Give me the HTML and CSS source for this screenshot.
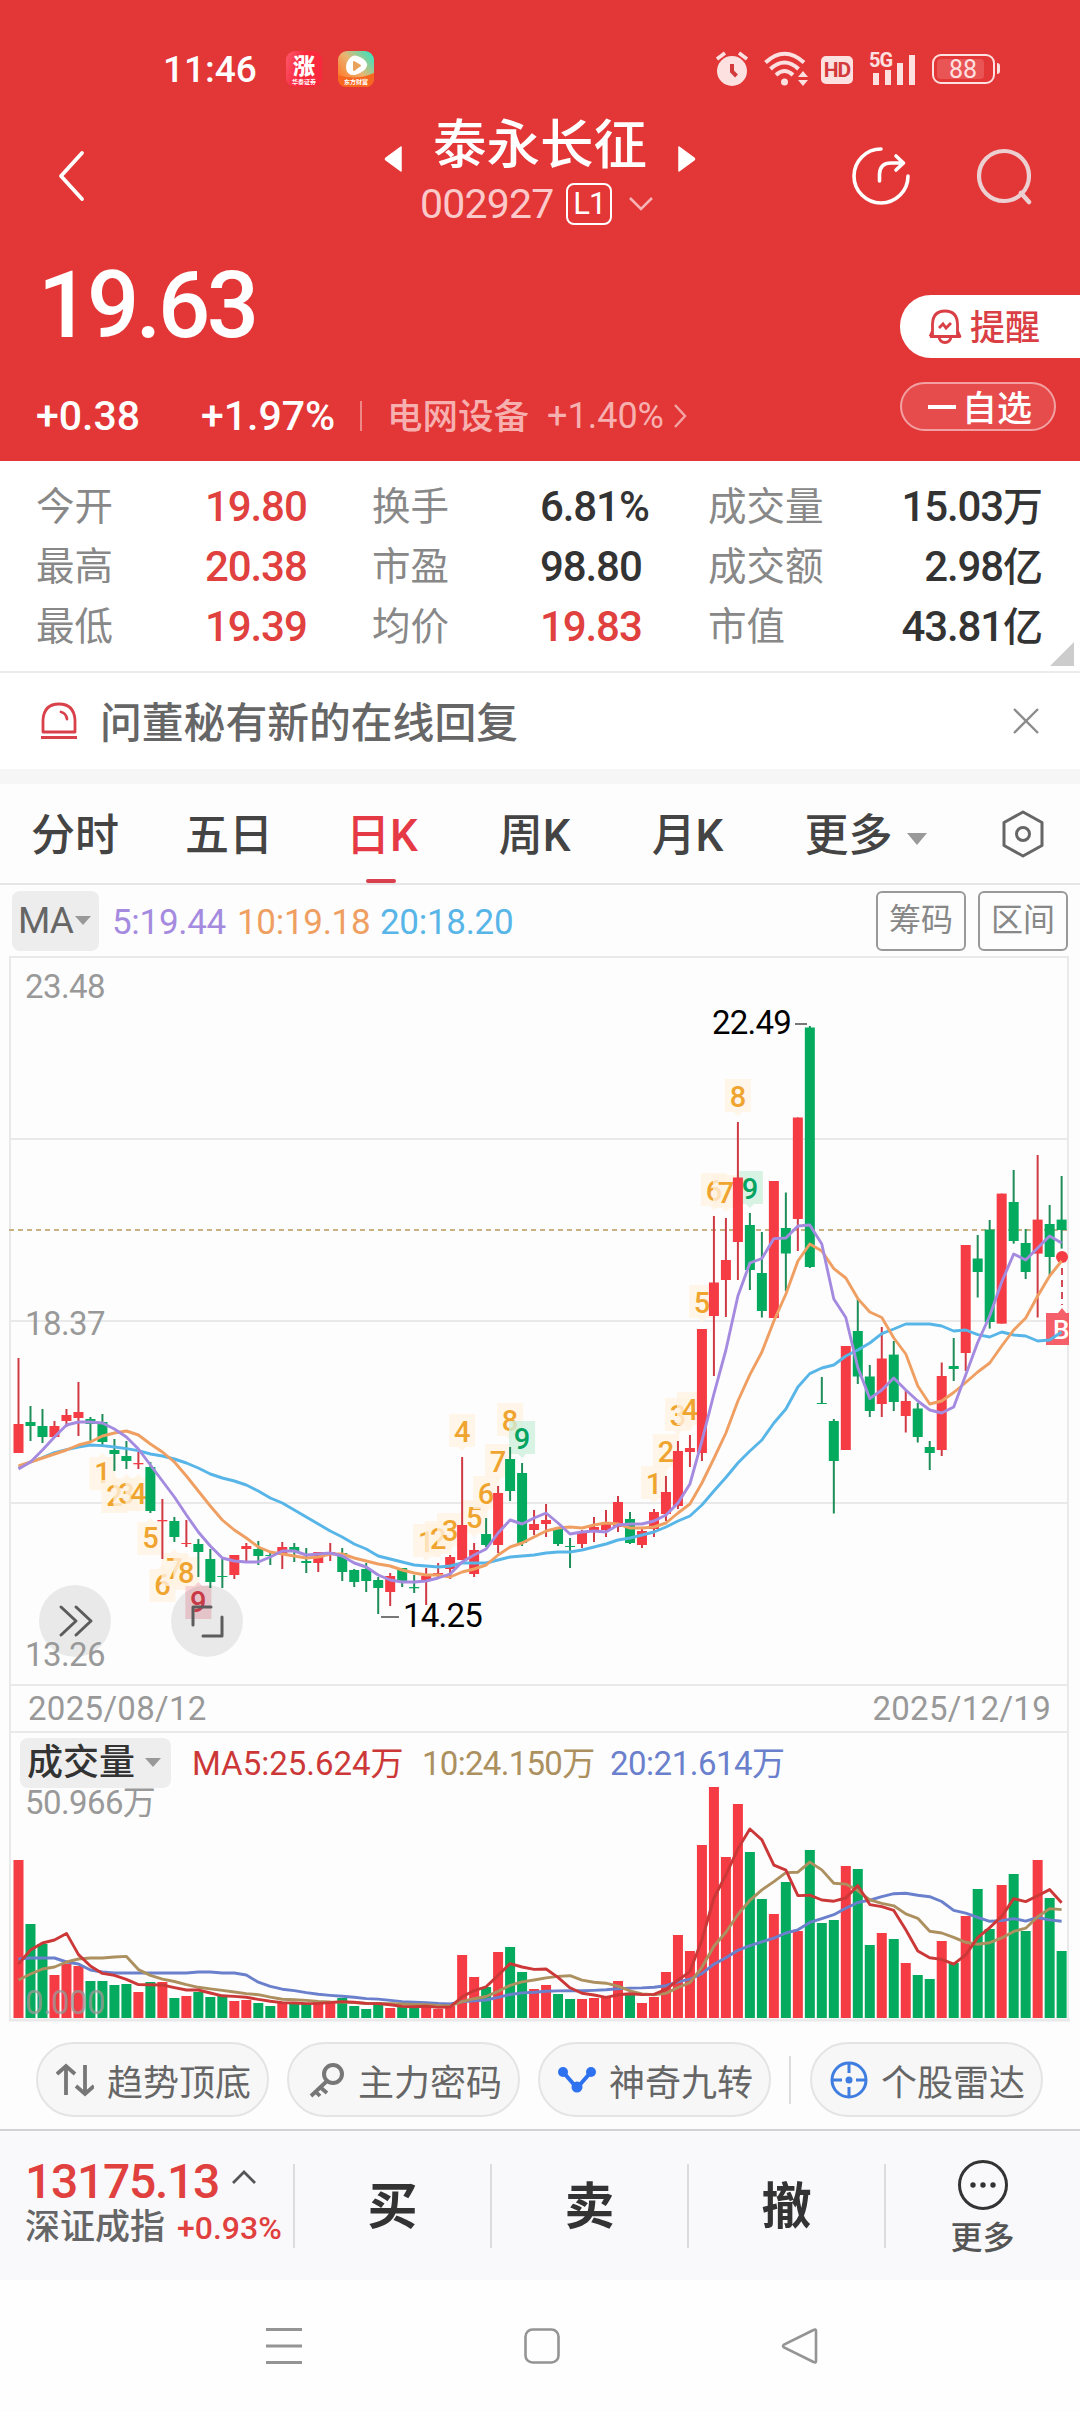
FILE: index.html
```html
<!DOCTYPE html>
<html lang="zh-CN">
<head>
    <meta charset="UTF-8">
    <meta name="viewport" content="width=device-width, initial-scale=1.0">
    <title>泰永长征 002927</title>
    <link rel="stylesheet" href="styles.css">
</head>
<body>
    <header class="header">
        <div class="status-bar">
            <span class="time">11:46</span>
            <svg class="app-icon" width="36" height="36" viewBox="0 0 36 36">
                <defs>
                    <linearGradient id="zhang" x1="0" y1="0" x2="1" y2="0.3">
                        <stop offset="0" stop-color="#ff5a6c"/>
                        <stop offset="0.5" stop-color="#f9283d"/>
                    </linearGradient>
                </defs>
                <rect width="36" height="36" rx="9" fill="url(#zhang)"/>
                <text class="app-char" x="18" y="23" text-anchor="middle">涨</text>
                <text class="app-sub" x="18" y="33" text-anchor="middle">华泰证券</text>
            </svg>
            <svg class="app-icon" width="36" height="36" viewBox="0 0 36 36">
                <defs>
                    <linearGradient id="play" x1="0.1" y1="0.8" x2="0.9" y2="0.1">
                        <stop offset="0" stop-color="#ff7a2a"/>
                        <stop offset="0.5" stop-color="#e9b573"/>
                        <stop offset="1" stop-color="#49e0b8"/>
                    </linearGradient>
                </defs>
                <rect width="36" height="36" rx="9" fill="url(#play)"/>
                <path d="M0 24 Q18 30 36 22 V27 Q36 36 27 36 H9 Q0 36 0 27Z" fill="#f8671f"/>
                <path d="M13 6 Q16 3 22 6 Q30 10 29 15 Q27 21 17 24 Q9 25 8 17 Q8 10 13 6Z" fill="#fff"/>
                <path d="M16 11 L22 14.5 L16 19Z" fill="#e8a25c" stroke="#e8a25c" stroke-width="2" stroke-linejoin="round"/>
                <text class="app-sub" x="18" y="33" text-anchor="middle">东方财富</text>
            </svg>
            <div class="status-right">
                <svg width="34" height="36" viewBox="0 0 34 36">
                    <circle cx="17" cy="20" r="15" fill="#fde0e0"/>
                    <path d="M2 8 L10 2 M24 2 L32 8" stroke="#fde0e0" stroke-width="3.6"/>
                    <path d="M17 13 V20.500 L21.500 25" stroke="#d23a3c" stroke-width="4" fill="none"/>
                </svg>
                <svg width="44" height="36" viewBox="0 0 44 36">
                    <g fill="none" stroke="#fde0e0" stroke-width="4">
                        <path d="M1.500 11.500 Q20.500 -6 40 11.500"/>
                        <path d="M6.500 18 Q20.500 5 34.500 18"/>
                        <path d="M12 24 Q20.500 16 29 24"/>
                    </g>
                    <circle cx="20.500" cy="31" r="3.500" fill="#fde0e0"/>
                    <path d="M34 26 L39 20 L44 26Z M34 29 L39 35 L44 29Z" fill="#fde0e0"/>
                </svg>
                <span class="hd">HD</span>
                <svg class="signal" width="48" height="40" viewBox="0 -4 48 40">
                    <text class="g5" x="0" y="16">5G</text>
                    <path d="M4 22 h6 v12 h-6Z M16 19 h6 v15 h-6Z M28 12 h6 v22 h-6Z M40 4 h6 v30 h-6Z" fill="#fde0e0"/>
                </svg>
                <span class="battery"><span class="battery-level">88</span></span>
            </div>
        </div>

        <div class="nav">
            <svg class="back" width="28" height="52" viewBox="0 0 28 52"><path d="M25 3 L4 26 L25 49" fill="none" stroke="#fff" stroke-width="3.800" stroke-linecap="round" stroke-linejoin="round"/></svg>
            <div class="nav-title">
                <div class="stock-name">
                    <svg width="18" height="28" viewBox="0 0 18 28"><path d="M17 2 V26 L2 15 Q1 14 2 13Z" fill="#fff" stroke="#fff" stroke-width="1.500" stroke-linejoin="round"/></svg>
                    <h1>泰永长征</h1>
                    <svg width="18" height="28" viewBox="0 0 18 28"><path d="M1 2 V26 L16 15 Q17 14 16 13Z" fill="#fff" stroke="#fff" stroke-width="1.500" stroke-linejoin="round"/></svg>
                </div>
                <div class="stock-code">
                    <span>002927</span>
                    <span class="level">L1</span>
                    <svg width="26" height="16" viewBox="0 0 26 16"><path d="M2 2 L13 13 L24 2" fill="none" stroke="#f7b5b5" stroke-width="2.500"/></svg>
                </div>
            </div>
            <svg class="share" width="60" height="60" viewBox="0 0 60 60">
                <path d="M30 3 A27 27 0 1 0 57 30" fill="none" stroke="#fff" stroke-width="3.600" stroke-linecap="round"/>
                <path d="M28.500 35 V28 Q29 17 40 17 H51 M45 10 L52.500 17 L45 24" fill="none" stroke="#fff" stroke-width="3.600" stroke-linecap="round" stroke-linejoin="round"/>
            </svg>
            <svg class="search" width="58" height="58" viewBox="0 0 58 58"><path d="M45 46 L53 55" stroke="#eccfd0" stroke-width="4.500" stroke-linecap="round"/><circle cx="28" cy="29" r="25" fill="none" stroke="#eccfd0" stroke-width="4.200"/></svg>
        </div>

        <div class="quote">
            <div class="quote-main">
                <div class="price">19.63</div>
                <div class="change-row">
                    <span class="change">+0.38</span>
                    <span class="percent">+1.97%</span>
                    <span class="change-line"></span>
                    <span class="sector">电网设备</span>
                    <span class="sector-percent">+1.40%</span>
                    <svg width="14" height="26" viewBox="0 0 14 26"><path d="M2 2 L12 13 L2 24" fill="none" stroke="#f3a3a3" stroke-width="2.500"/></svg>
                </div>
            </div>
            <div class="quote-side">
                <div class="remind">
                    <svg width="34" height="36" viewBox="0 0 34 36">
                        <path d="M4.500 27 V15 Q5 2 17 2 Q29 2 29.500 15 V27 M2 27.500 H32 L29.500 22 M2 27.500 L4.500 22 M11 28 Q12 33.500 17 33.500 Q22 33.500 23 28" fill="none" stroke="#d93f45" stroke-width="2.800" stroke-linejoin="round"/>
                        <path d="M11 19 L15 15 L18 19 L23 14" fill="none" stroke="#d93f45" stroke-width="2.800"/>
                    </svg>
                    <span>提醒</span>
                </div>
                <div class="watch"><i class="minus"></i><span>自选</span></div>
            </div>
        </div>
    </header>

    <section class="stats">
        <span class="label">今开</span><span class="value red">19.80</span>
        <span class="label">换手</span><span class="value">6.81%</span>
        <span class="label">成交量</span><span class="value end">15.03<b>万</b></span>
        <span class="label">最高</span><span class="value red">20.38</span>
        <span class="label">市盈</span><span class="value">98.80</span>
        <span class="label">成交额</span><span class="value end">2.98<b>亿</b></span>
        <span class="label">最低</span><span class="value red">19.39</span>
        <span class="label">均价</span><span class="value red">19.83</span>
        <span class="label">市值</span><span class="value end">43.81<b>亿</b></span>
        <i class="corner"></i>
    </section>

    <section class="notice">
        <svg width="36" height="38" viewBox="0 0 36 38">
            <path d="M2 30 V18 Q3 2 18 2 Q33 2 34 18 V30Z" fill="none" stroke="#d9414a" stroke-width="2.800" stroke-linejoin="round"/>
            <path d="M20 10 Q25 11 26 17" fill="none" stroke="#d9414a" stroke-width="2.800" stroke-linecap="round"/>
            <path d="M0 35.500 H36" stroke="#d9414a" stroke-width="3"/>
        </svg>
        <span class="notice-text">问董秘有新的在线回复</span>
        <svg width="28" height="28" viewBox="0 0 28 28"><path d="M2 2 L26 26 M26 2 L2 26" stroke="#8c8c8c" stroke-width="2.400"/></svg>
    </section>

    <nav class="tabs">
        <span class="tab">分时</span>
        <span class="tab">五日</span>
        <span class="tab active">日K</span>
        <span class="tab">周K</span>
        <span class="tab">月K</span>
        <span class="tab more">更多<i class="caret"></i></span>
        <svg class="setting" width="44" height="48" viewBox="0 0 44 48">
            <path d="M22 2 L41 12.500 V35.500 L22 46 L3 35.500 V12.500Z" fill="none" stroke="#666" stroke-width="3" stroke-linejoin="round"/>
            <circle cx="22" cy="24" r="6.500" fill="none" stroke="#666" stroke-width="3"/>
        </svg>
    </nav>

    <div class="ma-bar">
        <span class="ma-button">MA<i class="caret small"></i></span>
        <span class="ma5">5:19.44</span>
        <span class="ma10">10:19.18</span>
        <span class="ma20">20:18.20</span>
        <span class="outline-button first">筹码</span>
        <span class="outline-button">区间</span>
    </div>

    <svg class="kline" id="kline" width="1080" height="730" viewBox="0 0 1080 730"></svg>

    <div class="dates"><span>2025/08/12</span><span>2025/12/19</span></div>

    <div class="volume">
        <div class="volume-bar">
            <span class="volume-button">成交量<i class="caret small"></i></span>
            <span class="vol5">MA5:25.624万</span>
            <span class="vol10">10:24.150万</span>
            <span class="vol20">20:21.614万</span>
        </div>
        <svg class="volume-chart" id="volume" width="1080" height="235" viewBox="0 0 1080 235"></svg>
    </div>

    <div class="chips">
        <span class="chip">
            <svg width="38" height="36" viewBox="0 0 38 36"><path d="M10 33 V4 M1 12 L10 4 L19 12 M29 3 V32 M20 24 L29 32 L38 24" fill="none" stroke="#777" stroke-width="3.800"/></svg>
            趋势顶底
        </span>
        <span class="chip">
            <svg width="38" height="36" viewBox="0 0 38 36"><circle cx="26" cy="12" r="9" fill="none" stroke="#777" stroke-width="4"/><path d="M20 19 L4 34 M13 25 L20 31 M8 29 L13 34" stroke="#777" stroke-width="3.800" fill="none"/></svg>
            主力密码
        </span>
        <span class="chip">
            <svg width="38" height="36" viewBox="0 0 38 36"><path d="M5 10 L19 26 L33 10" fill="none" stroke="#2e72f0" stroke-width="4"/><circle cx="5" cy="10" r="5" fill="#2e72f0"/><circle cx="33" cy="10" r="5" fill="#2e72f0"/><circle cx="19" cy="25" r="5.500" fill="#2e72f0"/></svg>
            神奇九转
        </span>
        <i class="chip-line"></i>
        <span class="chip">
            <svg width="38" height="38" viewBox="0 0 38 38"><circle cx="19" cy="19" r="17" fill="none" stroke="#3f7de0" stroke-width="3"/><path d="M19 2 V12 M19 26 V36 M2 19 H12 M26 19 H36" stroke="#3f7de0" stroke-width="3"/><circle cx="19" cy="19" r="3.500" fill="#3f7de0"/></svg>
            个股雷达
        </span>
    </div>

    <footer class="trade">
        <div class="index">
            <div class="index-value">13175.13<svg width="26" height="16" viewBox="0 0 26 16"><path d="M2 14 L13 3 L24 14" fill="none" stroke="#555" stroke-width="2.800"/></svg></div>
            <div class="index-name">深证成指<span>+0.93%</span></div>
        </div>
        <div class="trade-item">买</div>
        <div class="trade-item">卖</div>
        <div class="trade-item">撤</div>
        <div class="trade-more">
            <svg width="52" height="52" viewBox="0 0 52 52"><circle cx="26" cy="26" r="23.500" fill="none" stroke="#333" stroke-width="3"/><circle cx="16" cy="26" r="2.700" fill="#333"/><circle cx="26" cy="26" r="2.700" fill="#333"/><circle cx="36" cy="26" r="2.700" fill="#333"/></svg>
            <span>更多</span>
        </div>
    </footer>

    <div class="system-nav">
        <svg width="38" height="40" viewBox="0 0 38 40"><path d="M1 3.500 H37 M1 20 H37 M1 36.500 H37" stroke="#949494" stroke-width="3"/></svg>
        <svg width="38" height="40" viewBox="0 0 38 40"><rect x="2.500" y="3.500" width="33" height="33" rx="7" fill="none" stroke="#949494" stroke-width="2.600"/></svg>
        <svg width="38" height="40" viewBox="0 0 38 40"><path d="M35 5 V35 Q35 37.500 32.500 36 L3 21.500 Q1 20 3 18.500 L32.500 4 Q35 2.500 35 5Z" fill="none" stroke="#949494" stroke-width="2.600"/></svg>
    </div>

    <script src="script.js"></script>
</body>
</html>
```
FILE: styles.css
```css
* {
    box-sizing: border-box;
}
body {
    margin: 0;
    width: 1080px;
    height: 2412px;
    overflow: hidden;
    background-color: #fdfdfd;
    color: #333;
    font-family: Roboto, "Noto Sans CJK SC", sans-serif;
}
svg {
    display: block;
    flex: none;
}
span, i {
    white-space: nowrap;
    flex: none;
}

/* header */
.header {
    height: 461px;
    background-color: #e33637;
    color: #fff;
}
.status-bar {
    display: flex;
    align-items: center;
    height: 138px;
    padding-left: 163px;
}
.time {
    width: 123px;
    font-size: 37px;
    font-weight: 500;
}
.app-icon {
    margin-right: 16px;
}
.app-char {
    font-size: 22px;
    font-weight: 900;
    fill: #fff;
}
.app-sub {
    font-size: 6px;
    font-weight: 700;
    fill: #fff;
}
.status-right {
    display: flex;
    align-items: center;
    margin-left: 325px;
    color: #fde0e0;
}
.status-right svg:nth-child(2) {
    margin: 0 13px 0 15px;
}
.hd {
    width: 32px;
    height: 28px;
    border-radius: 5px;
    background-color: #fde0e0;
    color: #d23a3c;
    font-size: 21px;
    font-weight: 700;
    line-height: 29px;
    letter-spacing: -1px;
    text-align: center;
    margin-top: 2px;
}
.signal {
    margin: -4px 0 0 16px;
}
.g5 {
    font-size: 20px;
    font-weight: 700;
    letter-spacing: -1px;
    fill: #fde0e0;
}
.battery {
    position: relative;
    width: 63px;
    height: 30px;
    margin-left: 15px;
    padding: 3px;
    border: 2.5px solid #fde0e0;
    border-radius: 9px;
}
.battery::after {
    content: "";
    position: absolute;
    right: -7px;
    top: 7px;
    width: 3px;
    height: 11px;
    border-radius: 0 3px 3px 0;
    background-color: #fde0e0;
}
.battery-level {
    display: block;
    width: 47px;
    height: 20px;
    padding-left: 12px;
    border-radius: 4px;
    background-color: #e95455;
    font-size: 25px;
    line-height: 21px;
}
.nav {
    display: flex;
    height: 100px;
    padding-left: 57px;
}
.back {
    margin-top: 12px;
}
.nav-title {
    width: 330px;
    margin-left: 290px;
    margin-top: -29px;
}
.stock-name {
    display: flex;
    align-items: center;
    justify-content: center;
    height: 72px;
}
.stock-name svg {
    margin-top: 28px;
}
.stock-name h1 {
    margin: 0 31px;
    font-size: 53.5px;
    font-weight: 500;
    line-height: 75px;
}
.stock-code {
    display: flex;
    align-items: center;
    height: 46px;
    padding-left: 45px;
    font-size: 41px;
    letter-spacing: -0.8px;
    color: #fbc9ca;
}
.level {
    width: 46px;
    height: 42px;
    margin: 0 16px 0 13px;
    border: 2.5px solid #fff;
    border-radius: 8px;
    color: #fff;
    font-size: 31px;
    line-height: 38px;
    text-align: center;
}
.share {
    margin: 8px 0 0 146px;
}
.search {
    margin: 9px 0 0 65px;
}
.quote {
    display: flex;
    justify-content: space-between;
    height: 222px;
}
.price {
    height: 132px;
    padding-left: 38px;
    font-size: 92px;
    font-weight: 500;
    line-height: 136px;
    letter-spacing: -3.4px;
}
.change-row {
    display: flex;
    align-items: center;
    height: 92px;
    padding-left: 36px;
    font-size: 42px;
}
.change {
    width: 165px;
    font-weight: 500;
    font-size: 41px;
}
.percent {
    width: 159px;
    font-weight: 500;
    font-size: 41px;
}
.change-line {
    width: 2px;
    height: 30px;
    background-color: #ef8788;
}
.sector {
    width: 185px;
    padding-left: 25px;
    font-size: 35.5px;
    font-weight: 500;
    line-height: 50px;
    margin-top: 1px;
    color: #f7b0b0;
}
.sector-percent {
    width: 126px;
    font-size: 36px;
    color: #f7b0b0;
}
.quote-side {
    width: 180px;
    padding-top: 57px;
}
.remind {
    display: flex;
    align-items: center;
    height: 63px;
    padding-left: 28px;
    border-radius: 31px 0 0 31px;
    background-color: #fff;
    color: #d93f45;
    font-size: 35px;
    font-weight: 500;
}
.remind span {
    margin: -4px 0 0 8px;
}
.watch {
    display: flex;
    align-items: center;
    width: 156px;
    height: 49px;
    margin-top: 24px;
    padding-left: 26px;
    border: 2px solid #f2a0a1;
    border-radius: 25px;
    background-color: #e74c4d;
    font-size: 35px;
    font-weight: 500;
}
.watch span {
    margin-top: -3px;
}
.minus {
    width: 28px;
    height: 4px;
    margin-right: 6px;
    background-color: #fff;
}

/* key figures */
.stats {
    position: relative;
    display: grid;
    grid-template-columns: 169px 167px 168px 168px 160px 174px;
    grid-auto-rows: 60px;
    height: 212px;
    padding: 16px 36px 0 36px;
    border-bottom: 2px solid #ececec;
    background-color: #fff;
    line-height: 60px;
}
.label {
    font-size: 38.5px;
    color: #888;
}
.value {
    font-size: 42px;
    font-weight: 500;
    letter-spacing: -1.1px;
}
.value b {
    font-size: 40px;
    font-weight: 500;
}
.end {
    text-align: right;
}
.red {
    color: #e0403e;
}
.corner {
    position: absolute;
    right: 6px;
    bottom: 5px;
    border-left: 24px solid transparent;
    border-bottom: 24px solid #ccc;
}

.notice {
    display: flex;
    align-items: center;
    height: 96px;
    padding: 0 40px 0 41px;
    background-color: #fff;
}
.notice-text {
    flex: 1;
    padding-left: 23px;
    margin-top: -2px;
    font-size: 41.8px;
    font-weight: 500;
    color: #666;
}

/* period tabs */
.tabs {
    display: flex;
    align-items: center;
    height: 116px;
    padding-left: 31px;
    border-top: 15px solid #f6f6f6;
    border-bottom: 2px solid #e6e6e6;
}
.tab {
    position: relative;
    font-size: 44px;
    font-weight: 500;
    line-height: 104px;
    height: 99px;
    color: #444;
}
.tab:nth-child(2) { margin-left: 66px; }
.tab:nth-child(3) { margin-left: 73px; }
.tab:nth-child(4) { margin-left: 81px; }
.tab:nth-child(5) { margin-left: 81px; }
.more {
    margin-left: 81px;
}
.active {
    color: #e63946;
}
.active::after {
    content: "";
    position: absolute;
    left: 20px;
    bottom: 0;
    width: 30px;
    height: 4px;
    border-radius: 2px;
    background-color: #d93f4c;
}
.caret {
    display: inline-block;
    margin-left: 15px;
    border: 10.5px solid transparent;
    border-top: 12px solid #999;
    border-bottom: 0;
    vertical-align: 6px;
}
.small {
    border-width: 8px;
    border-top-width: 9px;
    border-bottom: 0;
    margin-left: 2px;
    vertical-align: 8px;
}
.setting {
    margin-left: 74px;
}
.ma-bar {
    display: flex;
    align-items: center;
    height: 71px;
    padding-left: 12px;
    font-size: 35px;
    letter-spacing: -0.3px;
}
.ma-button {
    width: 87px;
    height: 60px;
    padding-left: 6px;
    border-radius: 8px;
    background-color: #ededed;
    color: #666;
    font-size: 37px;
    line-height: 60px;
    letter-spacing: -1px;
}
.ma5 { width: 125px; margin-left: 13px; color: #a58be0; }
.ma10 { width: 143px; color: #ef9f62; }
.ma20 { width: 143px; color: #58b5e8; }
.ma5, .ma10, .ma20 { padding-top: 3px; }
.outline-button {
    width: 90px;
    height: 60px;
    margin-left: 12px;
    border: 2px solid #999;
    border-radius: 6px;
    color: #888;
    font-size: 32px;
    line-height: 54px;
    letter-spacing: 0;
    text-align: center;
}
.first {
    margin-left: 353px;
}

/* charts */
.grid { stroke: #e9e9e9; stroke-width: 2; }
.up { fill: #f53b43; stroke: none; }
.down { fill: #04ab5f; stroke: none; }
.up-line { stroke: #cf3a44; stroke-width: 2; }
.down-line { stroke: #1f8d59; stroke-width: 2; }
.line { fill: none; stroke-width: 2.9; stroke-linejoin: round; }
.line5 { stroke: #a58be0; }
.line10 { stroke: #ef9f62; }
.line20 { stroke: #58b5e8; }
.vline5 { stroke: #cc3838; }
.vline10 { stroke: #ac905f; }
.vline20 { stroke: #6a80cc; }
.last-price { stroke: #c9b183; stroke-width: 1.8; stroke-dasharray: 5 4; }
.axis-text { font-size: 33px; letter-spacing: -0.6px; fill: #999; }
.mark-text { font-size: 33px; fill: #000; letter-spacing: -0.8px; }
.badge { fill: #fff2e2; fill-opacity: 0.78; }
.badge-text { font-size: 29px; font-weight: 500; fill: #efa42f; text-anchor: middle; }
.badge.green { fill: #cdeedd; }
.badge-text.green { fill: #04a35f; }
.badge.pink { fill: #f6c9d0; }
.badge-text.pink { fill: #d93f4c; }
.float { fill: #000; fill-opacity: 0.078; }
.float-icon { fill: none; stroke: #5c5c5c; stroke-width: 3; stroke-linecap: round; stroke-linejoin: round; }
.buy-badge { fill: #f2434f; fill-opacity: 0.85; }
.buy-text { font-size: 26px; font-weight: 500; fill: #fff; }
.buy-line { stroke: #d04a57; stroke-width: 2; stroke-dasharray: 7 5; }

.dates {
    display: flex;
    justify-content: space-between;
    align-items: center;
    height: 45px;
    margin: 0 11px 0 9px;
    padding: 0 16px 0 17px;
    border-left: 2px solid #e9e9e9;
    border-right: 2px solid #e9e9e9;
    color: #999;
    font-size: 33px;
    letter-spacing: 0.3px;
}
.volume {
    height: 291px;
}
.volume-chart {
    overflow: visible;
}
.volume-bar {
    display: flex;
    align-items: center;
    height: 56px;
    margin: 0 11px 0 9px;
    padding: 6px 0 0 9px;
    border: 2px solid #e9e9e9;
    border-bottom: 0;
    font-size: 33px;
    line-height: 46px;
}
.volume-button {
    width: 151px;
    height: 50px;
    padding-left: 7px;
    border-radius: 8px;
    background-color: #eee;
    font-size: 36px;
    font-weight: 500;
    line-height: 50px;
}
.volume-button .caret {
    margin-left: 10px;
}
.vol5, .vol10, .vol20 { margin-top: 2px; }
.vol5 { width: 230px; margin-left: 21px; color: #cc3838; }
.vol10 { width: 188px; color: #ac905f; letter-spacing: -0.7px; }
.vol20 { color: #6a80cc; letter-spacing: -0.5px; }

.chips {
    display: flex;
    align-items: center;
    height: 107px;
    padding: 8px 0 0 36px;
}
.chip {
    display: flex;
    align-items: center;
    width: 233px;
    height: 75px;
    margin-right: 18px;
    padding-left: 18px;
    border: 2px solid #e4e4e4;
    border-radius: 38px;
    background-color: #f7f7f7;
    color: #666;
    font-size: 36px;
}
.chip svg {
    margin-right: 13px;
}
.chip-line {
    width: 2px;
    height: 48px;
    margin-right: 19px;
    background-color: #ddd;
}

/* bottom bar */
.trade {
    display: flex;
    height: 151px;
    border-top: 2px solid #d2d2d4;
    background-color: #f9f9fb;
}
.index {
    width: 293px;
    padding: 22px 0 0 25px;
}
.index-value {
    display: flex;
    align-items: center;
    height: 56px;
    color: #e0403e;
    font-size: 48px;
    font-weight: 500;
    letter-spacing: -1.3px;
}
.index-value svg {
    margin: -8px 0 0 12px;
}
.index-name {
    height: 38px;
    color: #666;
    font-size: 35px;
    font-weight: 500;
    line-height: 38px;
}
.index-name span {
    margin-left: 12px;
    color: #e0403e;
    font-size: 32px;
}
.trade-item {
    width: 197px;
    height: 84px;
    margin-top: 33px;
    border-left: 2px solid #dcdcde;
    font-size: 50px;
    font-weight: 700;
    line-height: 86px;
    text-align: center;
}
.trade-more {
    display: flex;
    flex-direction: column;
    align-items: center;
    width: 195px;
    height: 84px;
    margin-top: 33px;
    border-left: 2px solid #dcdcde;
    color: #555;
    font-size: 32px;
    font-weight: 500;
    line-height: 48px;
}
.trade-more svg {
    margin-top: -5px;
    margin-bottom: 3px;
}
.system-nav {
    display: flex;
    gap: 220px;
    height: 131px;
    padding: 46px 0 0 265px;
    background-color: #fefefe;
}
```
FILE: script.js
```js
const STEP = 11.99;
const FIRST = 18.5;
const cx = i => FIRST + i * STEP;

// [direction, high, low, body top, body bottom]
const candles = [
    ['r',402,497,468,497], ['g',450,485,466,470], ['g',453,487,470,481], ['r',465,481,470,481],
    ['r',453,471,459,465], ['r',426,480,456,462], ['g',461,485,463,468], ['g',458,491,466,486],
    ['g',483,515,494,498], ['g',485,513,500,505], ['r',496,513,507,508.3], ['g',506,557,511,555],
    ['r',543,603,564,565.3], ['g',561,586,565,581], ['r',564,591,587,588], ['g',583,621,588,596],
    ['g',593,632,603,626], ['g',603,632,620,621], ['r',599,623,599,619], ['r',587,607,590,593],
    ['g',585,609,593,600], ['g',595,609,599,600], ['r',586,613,591,599], ['g',587,606,591,596],
    ['g',592,617,605,607], ['r',596,616,596,607], ['r',587,605,596,598], ['g',592,625,597,616],
    ['g',613,631,614,626], ['g',607,636,613,625], ['g',621,658,624,632], ['r',617,650,620,636],
    ['g',612,631,612,625], ['g',619,637,631,632.3], ['r',612,649,620,625], ['r',607,623,617,618.3],
    ['r',599,623,601,613], ['r',501,604,569,604], ['r',587,621,594,618], ['g',562,591,578,589],
    ['r',530,597,537,589], ['g',491,545,503,535], ['g',507,590,517,587], ['r',554,579,568,574],
    ['r',548,581,564,568], ['g',572,590,573,588], ['g',582,612,590,591], ['r',574,592,577,588],
    ['r',561,586,571,574], ['r',554,581,568,574], ['r',540,576,546,571], ['g',556,588,563,587],
    ['r',573,592,575,589], ['r',553,581,556,573], ['r',520,565,536,558], ['r',485,553,495,550],
    ['r',479,511,492,496], ['r',373,505,373,497], ['r',260,420,326.5,360], ['r',262,361,304,324],
    ['r',166,324,221.5,286], ['g',257,334,269,314], ['g',276,361.5,317,355], ['r',225,362,225,362],
    ['g',236.5,335,272,297.5], ['r',161.5,295,161.5,263], ['g',70,312,71.5,311], ['g',421,448,447,448],
    ['g',463,557.5,465,505], ['r',390,494,390,494], ['g',343,428,375,420.5], ['g',409,461,420.5,455],
    ['r',371,461,402.5,448], ['g',385,455,398.6,446], ['r',435,476.5,445,460], ['g',447,486.5,452.5,481],
    ['g',485,514,491,497], ['r',406.5,500,420,494], ['g',382,425,410,413], ['r',289,415,289,397],
    ['g',279,341.5,302.5,316], ['g',264,372.6,273.6,366], ['r',237.6,367.6,237.6,367.6], ['g',214,287.6,246,285],
    ['g',273,323,287,316], ['r',199,361.5,263.6,297.6], ['g',249,319,268,301], ['g',220,292.6,263.6,274]
];

const ma5 = [513,506,494,481,469,466,466,467,473,481,493,509,525,541,559,576,590,602,605,606,606,601,595,595,599,598,597,600,607,611,619,624,626,626,625,622,618,606,599,593,577,564,568,562,557,567,578,576,575,576,569,568,568,565,559,547,528,485,438,394,340,307,302.5,282.6,282,270,269,288,343,361.5,411.5,442.6,434,422,434,445,454,457,451,419,386.5,360,326,298,304,292,280,287];
const ma10 = [510,506,502,498,494,489,486,480,477,475,479,488,496,506,520,535,550,564,574,582,591,596,598,600,602,601,598,598,602,605,608,610,614,617,619,619,621,616,613,609,599,591,587,581,575,572,571,572,569,567,568,572,572,571,567,557,548,527,502.5,477,445,418.6,396,365,338,305,288,295,312.6,322,342.6,356,361.5,382,398,430,448,445,436.5,426.5,416,407,390,374,362,340,320,305];
const ma20 = [512,506,501.6,496.6,493.6,491,489,489.6,491,492.6,494.6,498,500,503,507,512,518,522,525,529,535,542,547,554,561,568,575,581,588,593,600,603,606,609,610,611,610,607,607,607,604,601,600,599,597,596,596,594,591,588,584,582,579,576,571,565,560,549,535,521.5,507,495,484,467,453,431,417.6,412,409,400,394,387,377.6,373,368,368,368,370,375,374,378.6,381,376,379,380,385,384,376];

// nine-turn counters: [candle index, digit, top, tip direction, colour]
const badges = [
    [7,1,501,'up',''], [8,2,524,'up',''], [9,3,522,'up',''], [10,4,522,'up',''], [11,5,566,'up',''],
    [12,6,613,'up',''], [13,7,597,'up',''], [14,8,601,'up',''], [15,9,630,'up','pink'],
    [34,1,568,'down',''], [35,2,565,'down',''], [36,3,557,'down',''], [37,4,458,'down',''], [38,5,544,'down',''],
    [39,6,520,'down',''], [40,7,488,'down',''], [41,8,447,'down',''], [42,9,465,'down','green'],
    [53,1,510,'down',''], [54,2,478,'down',''], [55,3,442,'down',''], [56,4,436,'down',''], [57,5,329,'down',''],
    [58,6,217,'down',''], [59,7,219,'down',''], [60,8,123,'down',''], [61,9,215,'down','green']
];

const volumes = [158,94,74,43,54,52,37,37,33,34,26,36,36,20,22,26,21,22,17,18,15,12,15,15,15,16,16,20,12,9,15,10,12,10,12,9,12,63,41,31,66,71,46,29,33,24,19,19,20,21,37,24,15,21,46,83,67,173,231,161,214,166,119,104,136,87,168,95,98,152,149,73,85,79,55,43,39,77,55,102,129,89,133,144,87,158,120,67];

const points = (list, toY) => list.map((v, i) => cx(i).toFixed(1) + ',' + toY(v).toFixed(1)).join(' ');

function drawKline() {
    let s = '';
    [1, 183, 365, 547, 729].forEach(y => s += `<line class="grid" x1="9" x2="1069" y1="${y}" y2="${y}"/>`);
    s += '<line class="grid" x1="10" x2="10" y1="0" y2="730"/><line class="grid" x1="1068" x2="1068" y1="0" y2="730"/>';
    s += '<line class="last-price" x1="9" x2="1069" y1="274" y2="274"/>';

    badges.forEach(([i, n, top, tip, color]) => {
        const x = cx(i);
        const arrow = tip === 'up'
            ? `M${x - 4} ${top} l4 -4 l4 4Z`
            : `M${x - 4} ${top + 33} l4 4 l4 -4Z`;
        s += `<path class="badge ${color}" d="M${x - 13} ${top} h26 v33 h-26Z ${arrow}"/>`;
        s += `<text class="badge-text ${color}" x="${x}" y="${top + (tip === 'up' ? 26 : 28)}">${n}</text>`;
    });

    candles.forEach(([d, high, low, top, bottom], i) => {
        const x = cx(i);
        const name = d === 'r' ? 'up' : 'down';
        s += `<line class="${name}-line" x1="${x}" x2="${x}" y1="${high}" y2="${low}"/>`;
        s += `<rect class="${name}" x="${x - 5}" y="${top}" width="10" height="${bottom - top}"/>`;
    });

    // buy marker
    s += '<circle class="up" cx="1062" cy="301" r="6"/><line class="buy-line" x1="1062" x2="1062" y1="312" y2="349"/>';
    s += '<path class="buy-badge" d="M1046 357 h12 l4 -5 l4 5 h3 v32 h-23Z"/><text class="buy-text" x="1053" y="383">B</text>';

    s += `<polyline class="line line20" points="${points(ma20, v => v)}"/>`;
    s += `<polyline class="line line10" points="${points(ma10, v => v)}"/>`;
    s += `<polyline class="line line5" points="${points(ma5, v => v)}"/>`;

    s += '<circle class="float" cx="75" cy="665" r="36"/><path class="float-icon" d="M61 651 L76 665 L61 679 M76 651 L91 665 L76 679"/>';
    s += '<circle class="float" cx="207" cy="665" r="36"/><path class="float-icon" d="M211 651 H193 V669 M203 680 H222 V661"/>';

    s += '<text class="axis-text" x="25" y="42">23.48</text><text class="axis-text" x="25" y="379">18.37</text><text class="axis-text" x="25" y="710">13.26</text>';
    s += '<text class="mark-text" x="712" y="78">22.49</text><path d="M795 68 H807 M381 661 H399" stroke="#777" stroke-width="2"/><text class="mark-text" x="403" y="671">14.25</text>';
    document.getElementById('kline').innerHTML = s;
}

// moving average of the last n bars, the first values come from earlier days
function average(n, seed) {
    return volumes.map((v, i) => i < seed.length ? seed[i] : volumes.slice(i - n + 1, i + 1).reduce((a, b) => a + b) / n);
}

function drawVolume() {
    const base = 231;
    let s = '<path class="grid" fill="none" d="M10 0 V232 M1068 0 V232"/><path d="M9 233 H1070" stroke="#e9e9e9" stroke-width="3"/>';
    volumes.forEach((v, i) => {
        s += `<rect class="${candles[i][0] === 'r' ? 'up' : 'down'}" x="${cx(i) - 5}" y="${base - v}" width="10" height="${v}"/>`;
    });
    const toY = v => base - v;
    s += `<polyline class="line vline20" points="${points(average(20, [59,60,60,60,56,54,48,46,45,45,45,45,45,45,45,46,46,45,45]), toY)}"/>`;
    s += `<polyline class="line vline10" points="${points(average(10, [38,44,49,51,56,59,60,60,61]), toY)}"/>`;
    s += `<polyline class="line vline5" points="${points(average(5, [54,68,75,78]), toY)}"/>`;
    s += '<text class="axis-text" x="25" y="27">50.966万</text><text class="axis-text" x="25" y="227" fill-opacity="0.8">0.000</text>';
    document.getElementById('volume').innerHTML = s;
}

drawKline();
drawVolume();
```
